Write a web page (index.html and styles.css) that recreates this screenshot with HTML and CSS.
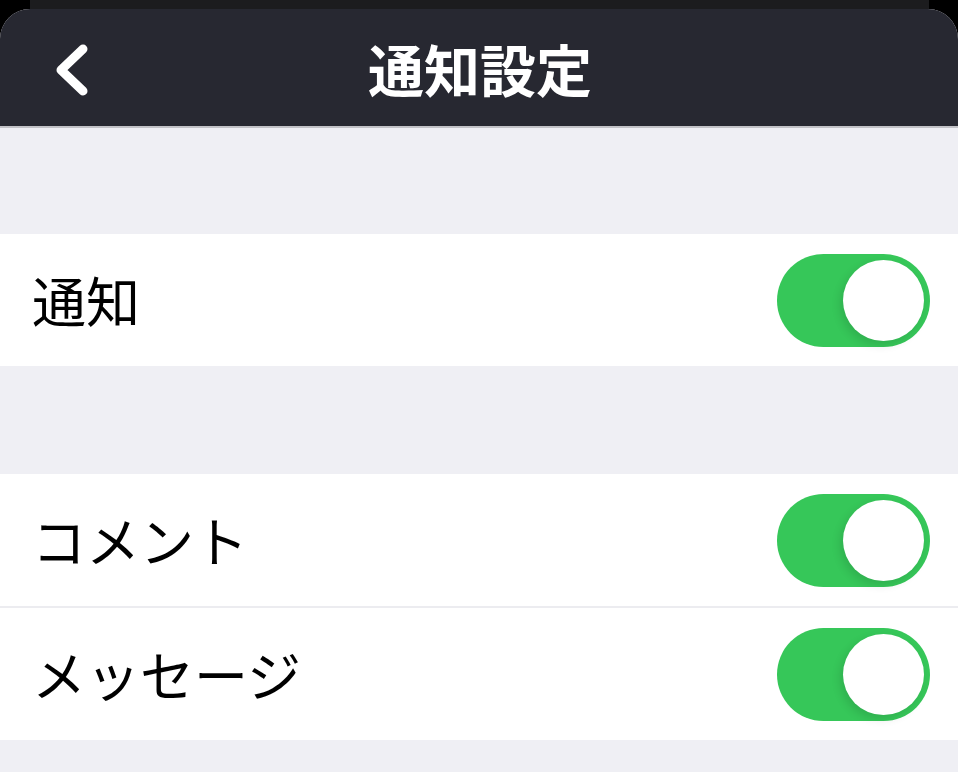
FILE: index.html
```html
<!DOCTYPE html>
<html lang="ja">
<head>
    <meta charset="UTF-8">
    <meta name="viewport" content="width=device-width, initial-scale=1.0">
    <title>通知設定</title>
    <link rel="stylesheet" href="styles.css">
</head>
<body>
    <div class="backdrop"></div>

    <div class="sheet">
        <header class="navbar">
            <a href="#" class="back" aria-label="戻る">
                <svg width="40" height="56" viewBox="0 0 40 56">
                    <polyline points="31,7 9,28 31,49" fill="none" stroke="#fff" stroke-width="9" stroke-linecap="round" stroke-linejoin="round"/>
                </svg>
            </a>
            <h1 class="title">通知設定</h1>
        </header>

        <div class="gap gap-top"></div>

        <section class="group">
            <div class="row">
                <span class="label">通知</span>
                <span class="switch on"><span class="knob"></span></span>
            </div>
        </section>

        <div class="gap"></div>

        <section class="group">
            <div class="row">
                <span class="label">コメント</span>
                <span class="switch on"><span class="knob"></span></span>
            </div>
            <div class="row">
                <span class="label">メッセージ</span>
                <span class="switch on"><span class="knob"></span></span>
            </div>
        </section>

        <div class="gap gap-bottom"></div>
    </div>
</body>
</html>
```

FILE: styles.css
```css
* {
    margin: 0;
    padding: 0;
    box-sizing: border-box;
    font-family: "Noto Sans CJK JP", "Noto Sans", sans-serif;
}

body {
    background: #000;
    height: 772px;
    overflow: hidden;
}

.backdrop {
    height: 9px;
    margin: 0 29px 0 30px;
    background: #1c1c1e;
}

.sheet {
    background: #efeff4;
    border-radius: 30px 30px 0 0;
    overflow: hidden;
    height: 763px;
}

.navbar {
    height: 119px;
    background: #272831;
    border-bottom: 2px solid #c2c2c7;
    display: flex;
    align-items: center;
    justify-content: center;
    position: relative;
}

.back {
    position: absolute;
    left: 52px;
    top: 33px;
    display: block;
    line-height: 0;
}

.title {
    color: #fff;
    font-size: 56px;
    font-weight: 700;
    line-height: 1;
    margin-left: 2px;
    margin-top: 0;
}

.gap {
    height: 106px;
}

.gap-top + .group + .gap {
    height: 108px;
}

.group {
    background: #fff;
}

.row {
    height: 132px;
    display: flex;
    align-items: center;
    justify-content: space-between;
    padding: 0 28px 0 32px;
}

.row + .row {
    border-top: 2px solid #ececf0;
    height: 134px;
}

.label {
    font-size: 54px;
    font-weight: 400;
    color: #000;
    line-height: 1;
}

.switch {
    width: 153px;
    height: 93px;
    border-radius: 47px;
    background: #e9e9ea;
    position: relative;
    display: block;
}

.switch.on {
    background: #36c759;
}

.knob {
    position: absolute;
    top: 6px;
    right: 6px;
    width: 81px;
    height: 81px;
    border-radius: 50%;
    background: #fff;
    box-shadow: -3px 4px 10px rgba(0,0,0,0.12);
}
```
